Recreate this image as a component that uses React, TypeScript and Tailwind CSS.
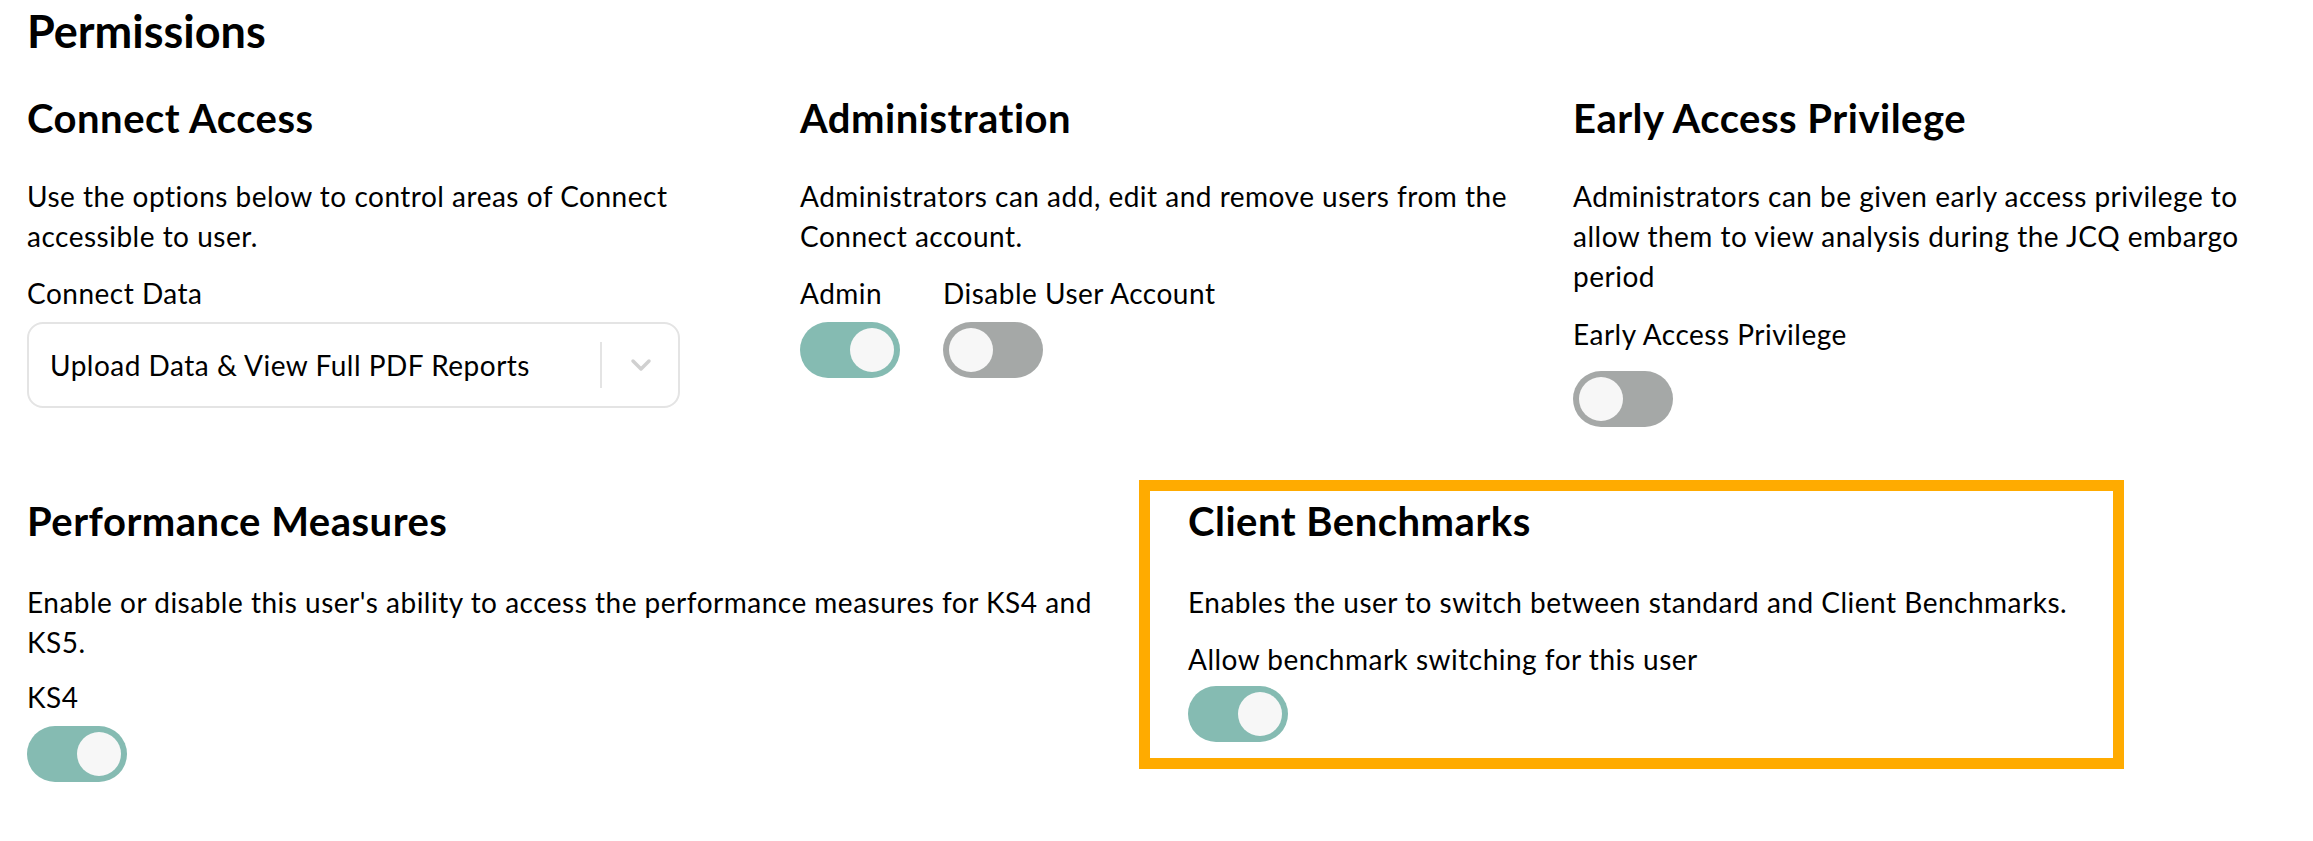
import { useState } from "react";

const Toggle = ({ initial }: { initial: boolean }) => {
  const [on, setOn] = useState(initial);
  return (
    <button
      type="button"
      onClick={() => setOn(!on)}
      className={`flex h-[56px] w-[100px] items-center rounded-full p-[6px] ${
        on ? "justify-end bg-[#85bbb2]" : "justify-start bg-[#a5a8a7]"
      }`}
    >
      <span className="block h-[44px] w-[44px] rounded-full bg-[#f7f7f7]" />
    </button>
  );
};

const Heading = ({ children }: { children: React.ReactNode }) => (
  <h2 className="text-[40px] font-bold leading-[48px]">{children}</h2>
);

const Desc = ({ children }: { children: React.ReactNode }) => (
  <p className="mt-[34px] text-[28px] leading-[40px]">{children}</p>
);

const App = () => {
  return (
    <div className="min-h-screen bg-white px-[27px] pt-[3px] text-black tracking-[0.5px] [font-family:Lato,sans-serif]">
      <h1 className="text-[45px] font-bold leading-[56px] tracking-normal">Permissions</h1>

      <div className="mt-[35px] grid grid-cols-3 gap-x-[60px]">
        <section>
          <Heading>Connect Access</Heading>
          <Desc>Use the options below to control areas of Connect accessible to user.</Desc>
          <div className="mt-[17px] text-[28px] leading-[40px]">Connect Data</div>
          <div className="mt-[9px] flex h-[86px] w-[653px] items-center rounded-[16px] border-2 border-[#e4e4e4] pl-[21px] pr-[26px]">
            <span className="flex-1 text-[28px]">Upload Data &amp; View Full PDF Reports</span>
            <span className="h-[46px] w-[2px] bg-[#e4e4e4]" />
            <svg
              className="ml-[28px] h-[14px] w-[22px]"
              viewBox="0 0 22 14"
              fill="none"
              stroke="#d0d0d0"
              strokeWidth="3.5"
              strokeLinecap="round"
              strokeLinejoin="round"
            >
              <path d="M3 3l8 8 8-8" />
            </svg>
          </div>
        </section>

        <section>
          <Heading>Administration</Heading>
          <Desc>Administrators can add, edit and remove users from the Connect account.</Desc>
          <div className="mt-[17px] flex gap-[43px]">
            <div className="w-[100px]">
              <div className="text-[28px] leading-[40px]">Admin</div>
              <div className="mt-[9px]">
                <Toggle initial />
              </div>
            </div>
            <div>
              <div className="whitespace-nowrap text-[28px] leading-[40px]">Disable User Account</div>
              <div className="mt-[9px]">
                <Toggle initial={false} />
              </div>
            </div>
          </div>
        </section>

        <section>
          <Heading>Early Access Privilege</Heading>
          <Desc>
            Administrators can be given early access privilege to allow them to view analysis during the JCQ
            embargo period
          </Desc>
          <div className="mt-[18px] text-[28px] leading-[40px]">Early Access Privilege</div>
          <div className="mt-[17px]">
            <Toggle initial={false} />
          </div>
        </section>
      </div>

      <div className="mt-[53px] flex">
        <section className="w-[1099px] pr-[20px] pt-[17px]">
          <Heading>Performance Measures</Heading>
          <p className="mt-[37px] text-[28px] leading-[40px]">
            Enable or disable this user's ability to access the performance measures for KS4 and KS5.
          </p>
          <div className="mt-[15px] text-[28px] leading-[40px]">KS4</div>
          <div className="mt-[9px]">
            <Toggle initial />
          </div>
        </section>

        <section className="ml-[13px] w-[985px] self-start border-[11px] border-[#ffab00] pb-[16px] pl-[38px] pr-[30px] pt-[6px]">
          <Heading>Client Benchmarks</Heading>
          <p className="mt-[37px] text-[28px] leading-[40px]">
            Enables the user to switch between standard and Client Benchmarks.
          </p>
          <div className="mt-[17px] text-[28px] leading-[40px]">Allow benchmark switching for this user</div>
          <div className="mt-[7px]">
            <Toggle initial />
          </div>
        </section>
      </div>
    </div>
  );
};

export default App;
